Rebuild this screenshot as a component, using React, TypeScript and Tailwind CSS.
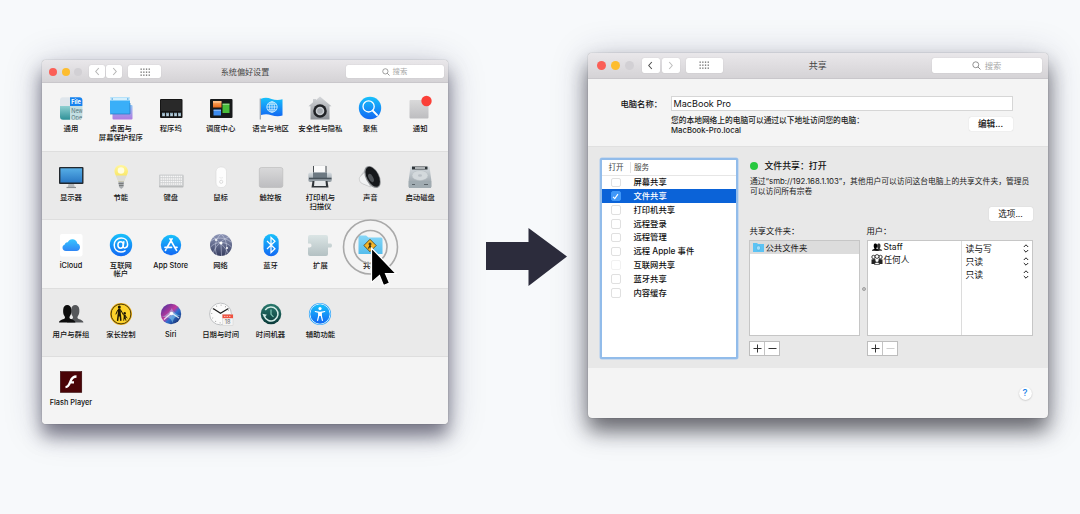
import React from "react";
import type { ReactNode } from "react";

function Icon({ children }: { children: ReactNode }) {
  return (
    <svg viewBox="0 0 28 28" className="h-7 w-7 shrink-0 overflow-visible">
      {children}
    </svg>
  );
}

function Gradients() {
  const list: [string, string, string][] = [
    ["blue", "#18c1fb", "#1268f3"],
    ["sky", "#35c4ff", "#2f86f5"],
    ["gray", "#d9d9da", "#bdbdc0"],
    ["teal", "#8fd0d2", "#2c8f96"],
    ["purple", "#8fc4f4", "#b07be0"],
    ["screen", "#56aee6", "#2a78c4"],
    ["globe", "#8f97b8", "#343b5e"],
    ["puzzle", "#dbe5e5", "#b4c1c3"],
    ["tm", "#2a7a6e", "#0b3a3a"],
    ["folder", "#86d7f8", "#55bdec"],
    ["metal", "#d8dee2", "#8c969d"],
    ["house", "#d5d7da", "#8d9197"],
    ["orange", "#ffb066", "#e86a1c"],
    ["bulb", "#fff6a0", "#f7e04a"],
  ];
  return (
    <svg className="absolute h-0 w-0">
      <defs>
        {list.map(([id, a, b]) => (
          <linearGradient key={id} id={id} x1="0" y1="0" x2="0" y2="1">
            <stop offset="0" stopColor={a} />
            <stop offset="1" stopColor={b} />
          </linearGradient>
        ))}
        <linearGradient id="siri" x1="0" y1="0" x2="1" y2="1">
          <stop offset="0" stopColor="#3a2f9e" />
          <stop offset="0.45" stopColor="#c23a9c" />
          <stop offset="0.6" stopColor="#2c6fd0" />
          <stop offset="1" stopColor="#12184a" />
        </linearGradient>
        <clipPath id="round">
          <rect x="3" y="3.3" width="22.4" height="22.4" rx="3" />
        </clipPath>
      </defs>
    </svg>
  );
}

const general = (
  <Icon>
    <g clipPath="url(#round)">
      <rect x="3" y="3" width="10" height="10" fill="#dfe6ec" />
      <rect x="3" y="12" width="10" height="14" fill="url(#teal)" />
      <rect x="13" y="3" width="13" height="9" fill="#1783ee" />
      <rect x="13" y="12" width="13" height="14" fill="#c4dfe3" />
      <text x="14.2" y="10" fontSize="5.6" fontWeight="700" fill="#fff">File</text>
      <text x="14.2" y="19.2" fontSize="5.6" fill="#55747c">New</text>
      <text x="14.2" y="26.4" fontSize="5.6" fill="#55747c">Ope</text>
    </g>
  </Icon>
);

const desktop = (
  <Icon>
    <rect x="5.5" y="11" width="20" height="14.5" rx="1" fill="url(#purple)" />
    <rect x="3" y="3.5" width="20" height="16.5" rx="1" fill="#3aaff8" />
    <path d="M3 6.500V4.500a1 1 0 0 1 1-1H22a1 1 0 0 1 1 1V6.500z" fill="#d4effc" />
    <path d="M4.500 5h1.500M20 5h1.500" stroke="#2a8fdc" strokeWidth="1" />
    <path d="M3 20H23V9" fill="none" stroke="#2277c4" strokeWidth="0.700" />
  </Icon>
);

const dock = (
  <Icon>
    <rect x="3" y="5" width="22.500" height="19" rx="1" fill="#151515" />
    <rect x="4" y="6" width="20.500" height="11" fill="#292929" />
    <path d="M5 20.500h19" stroke="#8ea9b9" strokeWidth="3.400" strokeDasharray="3 1" />
    <path d="M6 21h17.500" stroke="#e6edf2" strokeWidth="1" strokeDasharray="1.400 2.600" />
  </Icon>
);

const mission = (
  <Icon>
    <rect x="3" y="5" width="22.500" height="19" rx="1" fill="#17191a" />
    <rect x="6" y="7" width="8.500" height="6.500" fill="url(#orange)" />
    <rect x="15.500" y="9.500" width="7" height="9.500" fill="#48bd3a" />
    <rect x="6.500" y="15.500" width="7.500" height="6" fill="#3c8cf0" />
    <path d="M6 8h8.500M6.500 16.300h7.500M15.500 10.300h7" stroke="#fff" strokeOpacity="0.600" strokeWidth="0.800" />
  </Icon>
);

const flag = (
  <Icon>
    <path d="M3.300 4.500V25.500" stroke="#9aa0a8" strokeWidth="1.200" />
    <path d="M4 4.800C8 3.300 11 3.800 14.500 5C18 6.200 22 6.400 25.500 5.200V21.500C22 22.800 18 22.400 14.500 21.200C11 20 8 19.800 4 21z" fill="url(#blue)" />
    <g fill="none" stroke="#d8f2ff" strokeWidth="0.800">
      <circle cx="15" cy="13" r="5.200" />
      <ellipse cx="15" cy="13" rx="2.400" ry="5.200" />
      <path d="M15 7.800v10.400M9.800 13h10.400M10.600 10.200h8.800M10.600 15.800h8.800" />
    </g>
  </Icon>
);

const security = (
  <Icon>
    <path d="M14 2.500L25.500 12.300H23.500V25.500H4.500V12.300H2.500L7 8.300V5h3v1z" fill="url(#house)" />
    <circle cx="14" cy="17" r="6.800" fill="#202226" />
    <circle cx="14" cy="17" r="4.300" fill="#c8ccd1" />
    <circle cx="14" cy="17" r="2.800" fill="#a5a9af" />
  </Icon>
);

const spotlight = (
  <Icon>
    <circle cx="14" cy="14" r="11.200" fill="url(#blue)" />
    <circle cx="12.600" cy="12.400" r="5.600" fill="none" stroke="#fff" strokeWidth="1.300" />
    <path d="M16.700 16.600L21 21" stroke="#fff" strokeWidth="1.900" strokeLinecap="round" />
  </Icon>
);

const notify = (
  <Icon>
    <rect x="3.500" y="6" width="19" height="18.500" rx="1" fill="url(#gray)" />
    <circle cx="20.500" cy="7" r="5.200" fill="#fb4038" />
  </Icon>
);

const display = (
  <Icon>
    <rect x="2" y="4" width="24.500" height="17" rx="1" fill="#22282e" />
    <rect x="3.400" y="5.300" width="21.700" height="14.200" fill="url(#screen)" />
    <path d="M11.500 21h5.500l.7 3H10.800z" fill="#b4b8bb" />
    <path d="M9.500 24.500h9.500" stroke="#8b8f92" strokeWidth="1.200" />
  </Icon>
);

const bulb = (
  <Icon>
    <path d="M14 2C9.800 2 7.500 5 7.500 8.200C7.500 12 10.800 14 11.300 18.500H17C17.500 14 21 12 21 8.200C21 5 18.300 2 14 2z" fill="url(#bulb)" />
    <path d="M8.800 12.500H19.700L17 18.500H11.300z" fill="#dcdcd8" />
    <path d="M11.300 18.500H17L16.500 24L14.200 26L12 24z" fill="#a7abae" />
    <path d="M11.500 20.500h5M12 22.500h4.500" stroke="#666" strokeWidth="0.700" />
    <circle cx="14" cy="7.500" r="3.300" fill="#fffde0" />
  </Icon>
);

const keyboard = (
  <Icon>
    <rect x="2" y="12" width="24.500" height="12.500" rx="1" fill="#b9bbbc" />
    <rect x="2" y="11.500" width="24.500" height="11.500" rx="1" fill="#cccecf" />
    <path d="M3.500 13.500h21.500M3.500 16h21.500M3.500 18.500h21.500M3.500 21h21.500" stroke="#f7f7f7" strokeWidth="1.600" strokeDasharray="1.500 0.500" />
  </Icon>
);

const mouse = (
  <Icon>
    <rect x="9" y="4" width="10.500" height="20.500" rx="4.500" fill="#fdfdfd" stroke="#d8d8d8" strokeWidth="0.600" />
    <circle cx="14.200" cy="18.800" r="1.600" fill="none" stroke="#cacaca" strokeWidth="0.600" />
    <path d="M12.500 14.500c1 .6 2.500 .6 3.500 0" fill="none" stroke="#ddd" strokeWidth="0.600" />
  </Icon>
);

const trackpad = (
  <Icon>
    <rect x="2.300" y="4.500" width="23.500" height="20" rx="2" fill="url(#gray)" stroke="#b9b9b9" strokeWidth="0.600" />
  </Icon>
);

const printer = (
  <Icon>
    <path d="M7.500 2.500H20V11H7.500z" fill="#fbfbfb" stroke="#c8cacc" strokeWidth="0.400" />
    <path d="M7.500 3V10M20 3V10" stroke="#4a4f54" strokeWidth="1" />
    <rect x="2.300" y="9.500" width="23.500" height="9.500" rx="2" fill="url(#metal)" />
    <path d="M7 9.500H21V15H7z" fill="#6d7982" />
    <path d="M3 15.500h22.500" stroke="#48525a" strokeWidth="1.600" />
    <path d="M6.500 18H21.500L22.500 24.500H5.500z" fill="#303539" />
    <path d="M8.500 18H19.500L20 23H8z" fill="#e6e9eb" />
  </Icon>
);

const sound = (
  <Icon>
    <path d="M4 13.500C6 10 9 6 12.500 3.500L23 23.500C17 25 8 22.500 4.500 19.500z" fill="#cdcfd1" />
    <path d="M4.200 13.500C2.500 15 3.300 19 6 20.500L14.500 24L9 9z" fill="#f1f2f3" stroke="#aaa" strokeWidth="0.400" />
    <ellipse cx="16.500" cy="14" rx="6.800" ry="12" transform="rotate(-28 16.500 14)" fill="#8c8f92" />
    <ellipse cx="16.700" cy="13.800" rx="5.800" ry="10.900" transform="rotate(-28 16.700 13.800)" fill="#15171a" />
    <ellipse cx="15" cy="15" rx="2.200" ry="4.500" transform="rotate(-28 15 15)" fill="#4f5357" />
  </Icon>
);

const disk = (
  <Icon>
    <path d="M4.500 3.500H23.500L25.300 17V23.500a1.500 1.500 0 0 1-1.500 1.500H4.200A1.500 1.500 0 0 1 2.700 23.500V17z" fill="url(#metal)" />
    <path d="M6 3.500H21.500V6.500H6z" fill="#2f3539" />
    <path d="M9 5h10" stroke="#cdd2d5" strokeWidth="1.600" />
    <ellipse cx="14" cy="12.500" rx="8" ry="5" fill="#d3d9dc" stroke="#b5bcc1" strokeWidth="0.500" />
    <ellipse cx="14" cy="12.500" rx="2" ry="1.200" fill="#b9c0c5" />
    <path d="M2.700 18H25.300V23.500a1.500 1.500 0 0 1-1.500 1.500H4.200A1.500 1.500 0 0 1 2.700 23.500z" fill="#a0abb1" />
    <path d="M6 21.500h3M18 21.500h4" stroke="#5a6369" strokeWidth="1" />
  </Icon>
);

const icloud = (
  <Icon>
    <rect x="3" y="3" width="22.500" height="22.500" rx="2" fill="#fff" />
    <path d="M9 20C6.800 20 5.500 18.400 5.500 16.700C5.500 15.200 6.400 14 7.800 13.600C7.900 12 9.200 11 10.800 11.200C11.700 9.300 13.300 8.300 15.300 8.300C18 8.300 20 10.200 20.300 12.600C22 13 23 14.500 23 16.200C23 18.400 21.500 20 19.300 20z" fill="url(#sky)" />
  </Icon>
);

const at = (
  <Icon>
    <circle cx="14" cy="14" r="11.200" fill="url(#blue)" />
    <g fill="none" stroke="#fff" strokeWidth="1.500" strokeLinecap="round">
      <ellipse cx="13.600" cy="14" rx="2.700" ry="3.200" />
      <path d="M16.800 10.800L16.200 15.400C16 17.600 20.600 17.800 20.600 13.200C20.600 9.400 17.700 7 14.200 7C10 7 7.200 10 7.200 14C7.200 18 9.900 20.900 14 20.900C15.600 20.900 17 20.500 18 19.800" />
    </g>
  </Icon>
);

const appStore = (
  <Icon>
    <circle cx="14" cy="14" r="10.200" fill="url(#blue)" />
    <g stroke="#fff" strokeWidth="1.700" strokeLinecap="round">
      <path d="M15 7.800L9.800 17M13 7.800L18.600 17.800M8 16.300H14.500M17.800 16.300H20M8.900 18.700L8.500 19.400M19.100 18.700L19.500 19.400" />
    </g>
  </Icon>
);

const network = (
  <Icon>
    <circle cx="14" cy="14" r="11" fill="url(#globe)" />
    <g fill="none" stroke="#e3e7f5" strokeWidth="0.600" opacity="0.750">
      <path d="M4 10C9 6 18 6 24 11M3.500 16C9 10 19 10 24.500 16M14 3C8 8 7 18 10 24.500M14 3C20 8 21 18 18 24.500M6 6C12 10 19 17 21 22M22 6C14 9 7 17 6.500 22M14 13L14.500 25" />
    </g>
    <circle cx="14" cy="12" r="1.500" fill="#fff" />
    <circle cx="9" cy="9" r="1" fill="#fff" />
    <circle cx="20" cy="17" r="1" fill="#fff" />
  </Icon>
);

const bluetooth = (
  <Icon>
    <rect x="6.500" y="3" width="15.200" height="22.300" rx="7.600" fill="url(#blue)" />
    <path d="M10 10L18 17.700L14 21.500V6.500L18 10.300L10 18" fill="none" stroke="#fff" strokeWidth="1.200" />
  </Icon>
);

const extension = (
  <Icon>
    <path d="M2 6a2 2 0 0 1 2-2H20a2 2 0 0 1 2 2V12.500C23 12.800 26 11.500 26 14.500C26 17.500 23 16.300 22 16.600V23a2 2 0 0 1-2 2H4a2 2 0 0 1-2-2V16.600C3 16.300 5.500 17 5.500 14.500C5.500 12 3 12.800 2 12.500z" fill="url(#puzzle)" />
  </Icon>
);

const sharing = (
  <Icon>
    <path d="M2.500 6a1.500 1.500 0 0 1 1.500-1.500H10L12.500 6.500H25a1.500 1.500 0 0 1 1.500 1.500V23H2.500z" fill="url(#folder)" />
    <path d="M14 8.300L20.200 14.500L14 20.700L7.800 14.500z" fill="#f5b62a" stroke="#4b3b14" strokeWidth="0.800" />
    <path d="M14 11.500v3M12.500 13h3M14 14.500l-1.500 3M14 14.500l1.500 3" stroke="#2b220b" strokeWidth="1.200" />
  </Icon>
);

const usersShape = "M2 22.500C2.200 19.800 5.800 19.800 7.600 18.500C8.300 17.900 8 16.800 7.300 15.800C6.200 14.300 6 12 6.200 9.500C6.400 6.600 8 5 10.200 5C12.500 5 14.100 6.600 14.300 9.500C14.500 12 14.200 14.300 13.100 15.800C12.400 16.800 12.200 17.900 12.900 18.500C14.700 19.800 18.200 19.800 18.400 22.500z";

const users = (
  <Icon>
    <path d={usersShape} transform="translate(8 0)" fill="#55575a" />
    <path d={usersShape} fill="#0d0d0d" />
  </Icon>
);

const parental = (
  <Icon>
    <circle cx="14" cy="14" r="11" fill="#e9ad16" />
    <circle cx="14" cy="14" r="9.900" fill="#fdd22a" stroke="#3c2e08" strokeWidth="0.900" />
    <g stroke="#1d1706" strokeLinecap="round">
      <path d="M12.300 9.800V15" strokeWidth="3" />
      <path d="M11.300 15L10.600 20.300M13.300 15L13.800 20.300" strokeWidth="1.500" />
      <path d="M10.500 10.500L9 14M14 10.500L16.500 15" strokeWidth="1" />
      <path d="M17.700 15.500V18" strokeWidth="2" />
      <path d="M17.200 18L16.700 20.300M18.200 18L18.900 20.300M18.500 16L20 18" strokeWidth="0.900" />
    </g>
    <circle cx="12.300" cy="6.900" r="1.500" fill="#1d1706" />
    <circle cx="17.700" cy="13.300" r="1.200" fill="#1d1706" />
  </Icon>
);

const siri = (
  <Icon>
    <circle cx="14" cy="14" r="10.200" fill="url(#siri)" />
    <path d="M4.500 17C9 15.500 12 13 15 8C15.500 12 20 15 24 15.500C20 16.500 17 16 15.500 23C14 17 10 17 4.500 17z" fill="#9fe9f7" opacity="0.450" />
    <path d="M7 19.500L14.500 13L22 18" fill="none" stroke="#fff" strokeWidth="1.100" opacity="0.800" />
    <circle cx="14.500" cy="13.500" r="1.800" fill="#fff" opacity="0.900" />
  </Icon>
);

const clock = (
  <Icon>
    <circle cx="13.500" cy="14" r="10.900" fill="#fbfbfb" stroke="#b9bbbd" strokeWidth="0.900" />
    <circle cx="13.500" cy="14" r="8.800" fill="none" stroke="#8c8c8c" strokeWidth="1.200" strokeDasharray="0.700 3.908" />
    <path d="M6.500 8.800L13.500 13.300L21 8.800" fill="none" stroke="#1b1b1b" strokeWidth="1.200" strokeLinecap="round" />
    <rect x="15.500" y="14.500" width="10.500" height="10.800" fill="#f4f4f4" stroke="#c9c9c9" strokeWidth="0.400" />
    <rect x="15.500" y="14.500" width="10.500" height="3.700" fill="#f0513f" />
    <path d="M17 16.400h7.500" stroke="#fbc0b8" strokeWidth="1" strokeDasharray="1.500 1" />
    <text x="20.700" y="24.300" fontSize="5.600" textAnchor="middle" fill="#666">18</text>
  </Icon>
);

const timeMachine = (
  <Icon>
    <circle cx="14" cy="14" r="10.300" fill="url(#tm)" />
    <path d="M8.200 10A7 7 0 1 1 7.300 16" fill="none" stroke="#d4ece7" strokeWidth="1.500" />
    <path d="M5.300 13.700L7.100 17.200L10 14.700z" fill="#d4ece7" />
    <path d="M14 9.500V14.300L16.500 17" fill="none" stroke="#8ad0be" strokeWidth="1.100" />
  </Icon>
);

const access = (
  <Icon>
    <circle cx="14" cy="14" r="11.100" fill="#2aa4fb" />
    <circle cx="14" cy="14" r="10" fill="none" stroke="#fff" strokeWidth="0.800" />
    <circle cx="14" cy="14" r="9.500" fill="url(#blue)" />
    <circle cx="14" cy="8.600" r="1.600" fill="#fff" />
    <path d="M9.300 11.500L12.800 12.300V15.500L11.600 20.300M18.700 11.500L15.200 12.300V15.500L16.400 20.300" fill="none" stroke="#fff" strokeWidth="1.200" strokeLinecap="round" />
    <path d="M12.300 11.800H15.700V16H12.300z" fill="#fff" />
  </Icon>
);

const flash = (
  <Icon>
    <rect x="3.300" y="3.500" width="21.500" height="21" fill="#4a0407" stroke="#2b0204" strokeWidth="0.500" />
    <path d="M19.500 8.500C14.500 8.500 14 12 12.900 14.700C12 17.300 11 19 8.500 19.200M12.800 14.300H17" fill="none" stroke="#fff" strokeWidth="2.300" />
  </Icon>
);

type Pref = { label: string[]; icon: ReactNode };

const rows: Pref[][] = [
  [
    { label: ["通用"], icon: general },
    { label: ["桌面与", "屏幕保护程序"], icon: desktop },
    { label: ["程序坞"], icon: dock },
    { label: ["调度中心"], icon: mission },
    { label: ["语言与地区"], icon: flag },
    { label: ["安全性与隐私"], icon: security },
    { label: ["聚焦"], icon: spotlight },
    { label: ["通知"], icon: notify },
  ],
  [
    { label: ["显示器"], icon: display },
    { label: ["节能"], icon: bulb },
    { label: ["键盘"], icon: keyboard },
    { label: ["鼠标"], icon: mouse },
    { label: ["触控板"], icon: trackpad },
    { label: ["打印机与", "扫描仪"], icon: printer },
    { label: ["声音"], icon: sound },
    { label: ["启动磁盘"], icon: disk },
  ],
  [
    { label: ["iCloud"], icon: icloud },
    { label: ["互联网", "帐户"], icon: at },
    { label: ["App Store"], icon: appStore },
    { label: ["网络"], icon: network },
    { label: ["蓝牙"], icon: bluetooth },
    { label: ["扩展"], icon: extension },
    { label: ["共享"], icon: sharing },
  ],
  [
    { label: ["用户与群组"], icon: users },
    { label: ["家长控制"], icon: parental },
    { label: ["Siri"], icon: siri },
    { label: ["日期与时间"], icon: clock },
    { label: ["时间机器"], icon: timeMachine },
    { label: ["辅助功能"], icon: access },
  ],
  [{ label: ["Flash Player"], icon: flash }],
];

function Chevron({ dir, color }: { dir: "left" | "right"; color: string }) {
  return (
    <svg viewBox="0 0 8 10" className="h-[9px] w-[7px]">
      <path d={dir === "left" ? "M5.500 1L2 5L5.500 9" : "M2.500 1L6 5L2.500 9"} fill="none" stroke={color} strokeWidth="1.200" />
    </svg>
  );
}

function GridDots() {
  return (
    <svg viewBox="0 0 10 8" className="h-2 w-2.5">
      {[1, 4, 7].map((y) =>
        [0.5, 3.2, 5.9, 8.6].map((x) => <rect key={`${x}-${y}`} x={x} y={y - 0.5} width="1.300" height="1.300" fill="#6b6b6b" />),
      )}
    </svg>
  );
}

function SearchGlyph({ size }: { size: string }) {
  return (
    <svg viewBox="0 0 10 10" className={size}>
      <circle cx="4.200" cy="4.200" r="3.300" fill="none" stroke="#7a7a7a" strokeWidth="0.900" />
      <path d="M6.600 6.600L9.400 9.400" stroke="#7a7a7a" strokeWidth="1" />
    </svg>
  );
}

const control = "flex items-center justify-center rounded-[2px] bg-white shadow-[0_0_1px_rgba(0,0,0,0.22)]";

function PreferencesWindow() {
  return (
    <section className="relative mt-[60px] flex h-[364px] w-[406px] shrink-0 flex-col rounded-[4px] bg-[#f4f4f4] shadow-[0_0_1px_rgba(0,0,0,0.5),0_12px_18px_rgba(40,38,60,0.55),0_5px_36px_rgba(40,40,80,0.26)]">
      <header className="grid h-[23px] grid-cols-[1fr_auto_1fr] items-center rounded-t-[4px] border-b border-[#c9c7cb] bg-linear-to-b from-[#e9e7ea] to-[#d5d3d6] pt-px">
        <div className="flex items-center pl-[7px]">
          <i className="h-2 w-2 rounded-full bg-[#fb5f57]" />
          <i className="ml-[5px] h-2 w-2 rounded-full bg-[#fdbd2f]" />
          <i className="ml-1 h-2 w-2 rounded-full bg-[#d2d0d4]" />
          <span className={`${control} ml-[7px] h-[13px] w-4`}><Chevron dir="left" color="#b5b5b5" /></span>
          <span className={`${control} ml-px h-[13px] w-4`}><Chevron dir="right" color="#b5b5b5" /></span>
          <span className={`${control} ml-1.5 h-[13px] w-[33px]`}><GridDots /></span>
        </div>
        <h1 className="pt-px text-[8.1px] leading-3 text-[#454545]">系统偏好设置</h1>
        <div className={`${control} mr-[4.500px] h-[13px] w-[98px] gap-[3px] justify-self-end text-[7.4px] text-[#a8a8a8]`}>
          <SearchGlyph size="h-2 w-2" />
          <span className="leading-[9px]">搜索</span>
        </div>
      </header>
      {rows.map((row, i) => (
        <div
          key={i}
          className={`flex pl-[4px] ${
            i === 4 ? "flex-1 rounded-b-[4px]" : i === 0 ? "h-[68px]" : "h-[68.500px]"
          } ${i % 2 ? "border-y border-[#dedede] bg-[#eaeaea] pt-[11px]" : "bg-[#f4f4f4] pt-[11px]"}`}
        >
          {row.map((pref) => (
            <div key={pref.label[0]} className="flex w-[49.900px] shrink-0 flex-col items-center">
              {pref.icon}
              <div className="mt-[3px] text-center text-[7.35px] leading-[8.500px] font-medium whitespace-nowrap text-[#111]">
                {pref.label.map((line) => (
                  <p key={line}>{line}</p>
                ))}
              </div>
            </div>
          ))}
        </div>
      ))}
      <svg viewBox="0 0 60 70" className="absolute top-[157px] left-[297.500px] h-[70px] w-[60px]">
        <circle cx="30.500" cy="30" r="27" fill="none" stroke="#a9a9a9" strokeWidth="1.600" />
        <circle cx="30.500" cy="30" r="16.500" fill="none" stroke="#a9a9a9" strokeWidth="1.600" />
        <path d="M31.500 31V65.500L39.500 58.500L43.500 68.500L49.500 66L45.500 56.500H56z" fill="#000" stroke="#fff" strokeWidth="1.200" />
      </svg>
    </section>
  );
}

const services = [
  { name: "屏幕共享", state: "off" },
  { name: "文件共享", state: "on" },
  { name: "打印机共享", state: "off" },
  { name: "远程登录", state: "off" },
  { name: "远程管理", state: "off" },
  { name: "远程 Apple 事件", state: "off" },
  { name: "互联网共享", state: "disabled" },
  { name: "蓝牙共享", state: "off" },
  { name: "内容缓存", state: "off" },
];

function ServiceList() {
  return (
    <div className="flex h-[201px] w-[138px] shrink-0 flex-col rounded-[2px] border-[2.5px] border-[#92bcea] bg-white shadow-[0_0_0_0.5px_#a9caf0]">
      <div className="flex h-[15.500px] shrink-0 items-center border-b border-[#e6e6e6] text-[7.6px] text-[#444]">
        <span className="w-[29.500px] border-r border-[#e2e2e2] pl-[7px] leading-[11px]">打开</span>
        <span className="pl-[3px]">服务</span>
      </div>
      {services.map((s) => (
        <div
          key={s.name}
          className={`flex h-[13.800px] shrink-0 items-center text-[8.3px] font-medium ${s.state === "on" ? "bg-[#0b63d8] text-white" : "text-[#111]"}`}
        >
          <span
            className={`ml-[9.500px] flex h-[9.500px] w-[9.500px] items-center justify-center rounded-[2px] border ${
              s.state === "on"
                ? "border-[#3f97f8] bg-[#3f97f8]"
                : s.state === "off"
                  ? "border-[#e0e0e0] bg-white"
                  : "border-[#f1f1f1] bg-white"
            }`}
          >
            {s.state === "on" && (
              <svg viewBox="0 0 8 8" className="h-[7px] w-[7px] shrink-0">
                <path d="M1.200 4.300L3.200 6.500L6.800 1.300" fill="none" stroke="#fff" strokeWidth="1.300" />
              </svg>
            )}
          </span>
          <span className="ml-[13px] whitespace-nowrap">{s.name}</span>
        </div>
      ))}
    </div>
  );
}

function PlusMinus({ faded }: { faded?: boolean }) {
  return (
    <div className="mt-[5px] flex h-[15px] w-[31px] border border-[#bdbdbd] bg-white">
      <svg viewBox="0 0 29 13" className="h-[13px] w-[29px]">
        <path d="M3.500 6.500h8M7.500 2.500v8" stroke="#333" strokeWidth="1" />
        <path d="M14.500 0v13" stroke="#c4c4c4" strokeWidth="1" />
        <path d="M18.500 6.500h8" stroke={faded ? "#cfcfcf" : "#333"} strokeWidth="1" />
      </svg>
    </div>
  );
}

function SharingWindow() {
  return (
    <section className="mt-[52.500px] flex h-[365.500px] w-[459.500px] shrink-0 flex-col rounded-[4px] bg-[#f4f4f4] shadow-[0_0_1px_rgba(0,0,0,0.5),0_13px_20px_rgba(20,20,25,0.55),0_5px_36px_rgba(40,40,80,0.26)]">
      <header className="grid h-[26.500px] shrink-0 grid-cols-[1fr_auto_1fr] items-center rounded-t-[4px] border-b border-[#c9c7cb] bg-linear-to-b from-[#e9e7ea] to-[#d5d3d6]">
        <div className="flex items-center pl-[8.500px]">
          <i className="h-[9px] w-[9px] rounded-full bg-[#fb5f57]" />
          <i className="ml-[5px] h-[9px] w-[9px] rounded-full bg-[#fdbd2f]" />
          <i className="ml-[5px] h-[9px] w-[9px] rounded-full bg-[#d2d0d4]" />
          <span className={`${control} ml-2 h-[15px] w-[18px]`}><Chevron dir="left" color="#4d4d4d" /></span>
          <span className={`${control} ml-[2px] h-[15px] w-[18px]`}><Chevron dir="right" color="#bdbdbd" /></span>
          <span className={`${control} ml-[6px] h-[15px] w-[37px]`}><GridDots /></span>
        </div>
        <h1 className="pt-[2px] text-[9px] leading-3 text-[#454545]">共享</h1>
        <div className={`${control} mr-[6px] h-[15px] w-[110px] gap-[4px] justify-self-end text-[8.300px] text-[#a8a8a8]`}>
          <SearchGlyph size="h-[9px] w-[9px]" />
          <span className="pt-px leading-[10px]">搜索</span>
        </div>
      </header>

      <div className="h-[67px] shrink-0 pt-[17px] pl-[32.500px]">
        <div className="flex h-[15px] items-center">
          <label className="w-[50.500px] pt-px text-[8.3px] font-medium whitespace-nowrap text-[#111]">电脑名称：</label>
          <div className="flex h-[15px] w-[342px] items-center border border-[#d6d6d6] bg-white pt-px pl-[1.500px] text-[9.100px] text-[#111]">MacBook Pro</div>
        </div>
        <div className="mt-[4px] flex w-[392px] justify-between pl-[50.500px]">
          <div className="pt-px text-[7.720px] leading-[9.500px] font-medium whitespace-nowrap text-[#1b1b1b]">
            <p>您的本地网络上的电脑可以通过以下地址访问您的电脑：</p>
            <p>MacBook-Pro.local</p>
          </div>
          <button className={`${control} mt-[2px] h-[14px] w-[44px] text-[8.600px] font-medium text-[#111]`}>编辑...</button>
        </div>
      </div>

      <div className="flex h-[222px] shrink-0 border-t border-[#e0e0e0] bg-[#e8e8e8] pt-[11px] pl-[11.500px]">
        <ServiceList />
        <div className="ml-[11px] w-[284px]">
          <div className="flex h-[15px] items-center text-[8.900px] font-medium whitespace-nowrap text-[#111]">
            <i className="mr-[7px] ml-px h-2 w-2 rounded-full bg-[#27c83f]" />
            文件共享：打开
          </div>
          <p className="mt-[4px] ml-[1.500px] text-[7.800px] leading-[9.500px] whitespace-nowrap text-[#1b1b1b]">
            通过“smb://192.168.1.103”，其他用户可以访问这台电脑上的共享文件夹，管理员
            <br />
            可以访问所有宗卷
          </p>
          <button className={`${control} mt-[11px] ml-auto h-[14px] w-[44px] text-[8.600px] text-[#111]`}>选项...</button>
          <div className="mt-[4px] flex">
            <div className="w-[112px]">
              <p className="h-[15px] pl-px text-[8.300px] leading-[12px] text-[#111]">共享文件夹：</p>
              <div className="h-24 w-[111px] border border-[#c6c6c6] bg-white">
                <div className="flex h-[13px] items-center bg-[#dcdcdc] pl-[3px] text-[8.400px] text-[#111]">
                  <svg viewBox="0 0 11 9" className="mr-[2px] h-[9px] w-[11px]">
                    <path d="M0 0h4l1 1h6v8H0z" fill="#5cc3f4" />
                    <circle cx="5.500" cy="5" r="2.200" fill="#a5dffa" stroke="#3aa4d8" strokeWidth="0.500" />
                  </svg>
                  <span className="pt-px">公共文件夹</span>
                </div>
              </div>
              <PlusMinus />
            </div>
            <div className="flex w-[6px] items-center justify-center pb-[4px]">
              <i className="h-1 w-1 rounded-full border border-[#a0a0a0] bg-[#c5c5c5]" />
            </div>
            <div className="w-[166px]">
              <p className="h-[15px] text-[8.300px] leading-[12px] text-[#111]">用户：</p>
              <div className="flex h-24 border border-[#c6c6c6] bg-white text-[8.600px] text-[#111]">
                <div className="w-[94px] border-r border-[#dcdcdc] pl-[3px]">
                  <div className="flex h-[12.500px] items-center gap-[1px]">
                    <svg viewBox="1 4 26 19" className="h-2 w-3">
                      <path d={usersShape} transform="translate(8 0)" fill="#333" />
                      <path d={usersShape} fill="#000" />
                    </svg>
                    Staff
                  </div>
                  <div className="flex h-[12.500px] items-center gap-[1px]">
                    <svg viewBox="0 0 12 11" className="h-[11px] w-3">
                      <g fill="#fff" stroke="#111" strokeWidth="0.800">
                        <circle cx="2.500" cy="3" r="1.700" />
                        <circle cx="9.500" cy="3" r="1.700" />
                        <circle cx="6" cy="2.500" r="1.900" />
                      </g>
                      <path d="M0.500 10V5.500L3.500 5L6 6.500L8.500 5L11.500 5.500V10z" fill="#222" />
                      <circle cx="6" cy="6.500" r="1.500" fill="#fff" />
                      <path d="M3.500 10.500c0-3 5-3 5 0z" fill="#fff" stroke="#111" strokeWidth="0.600" />
                    </svg>
                    <span className="pt-px">任何人</span>
                  </div>
                </div>
                <div className="flex-1 pt-[1px]">
                  {["读与写", "只读", "只读"].map((p, i) => (
                    <div key={i} className="flex h-[13.200px] items-center justify-between pr-[2.500px] pl-[4px] text-[8.800px]">
                      {p}
                      <svg viewBox="0 0 6 9" className="h-[9px] w-1.5">
                        <path d="M0.800 3L3 0.800L5.200 3M0.800 6L3 8.200L5.200 6" fill="none" stroke="#222" strokeWidth="1" />
                      </svg>
                    </div>
                  ))}
                </div>
              </div>
              <PlusMinus faded />
            </div>
          </div>
        </div>
      </div>

      <footer className="flex flex-1 items-center justify-end pr-4">
        <button className="flex h-[13px] w-[13px] items-center justify-center rounded-full bg-white text-[9.500px] font-medium text-[#1e83e8] shadow-[0_0.5px_1.5px_rgba(0,0,0,0.25)]">?</button>
      </footer>
    </section>
  );
}

export default function App() {
  return (
    <main className="flex h-[514px] w-[1080px] overflow-hidden bg-[#f7f9fb] pl-[42px] font-['Inter','Noto_Sans_CJK_SC',sans-serif]">
      <Gradients />
      <PreferencesWindow />
      <svg viewBox="0 0 81 58" className="mt-[228px] mr-[21px] ml-[38px] h-[58px] w-[81px] shrink-0">
        <path d="M0 14H42.500V0L81 28.500L42.500 58V42H0z" fill="#2c2c3c" />
      </svg>
      <SharingWindow />
    </main>
  );
}
